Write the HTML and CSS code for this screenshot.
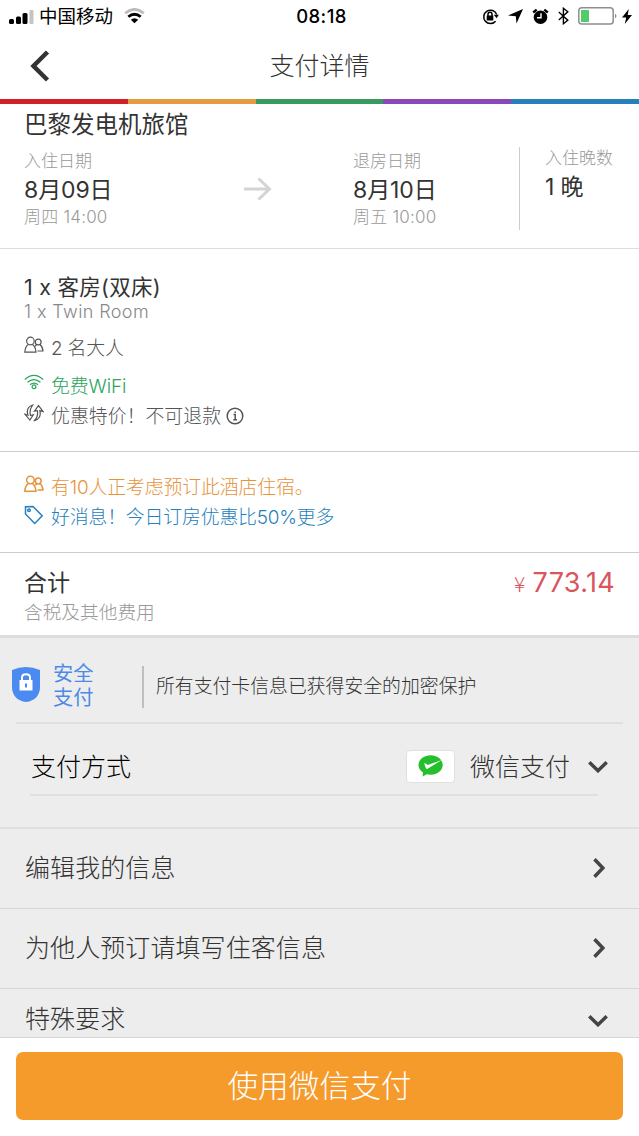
FILE: index.html
```html
<!DOCTYPE html>
<html lang="zh-CN">
<head>
<meta charset="utf-8">
<meta name="viewport" content="width=device-width, initial-scale=1">
<title>支付详情</title>
<link rel="stylesheet" href="styles.css">
</head>
<body>
<svg class="sprite" aria-hidden="true">
  <symbol id="people" viewBox="0 0 20 18">
    <path d="M4.500 8.300C2.200 10 1 12.500 .8 16.200H12C11.700 12.500 10.600 10 8.300 8.300"/>
    <circle cx="6.400" cy="5" r="3.800"/>
    <circle cx="14.200" cy="6" r="2.900"/>
    <path d="M11.300 10.300l1.200-1.700M15.900 8.500c1.900 1.400 2.900 3.700 3.100 6.500h-5.500"/>
  </symbol>
  <symbol id="chevron" viewBox="0 0 20 12"><path d="M1.300 1.300 10 9.700l8.700-8.400"/></symbol>
</svg>
<div class="phone">
  <header class="status">
    <div class="carrier">
      <svg width="26" height="17" viewBox="0 0 26 17"><rect x="0" y="11" width="5" height="5" rx="1.500"/><rect x="7" y="8.500" width="5" height="7.500" rx="1.500"/><rect x="13.500" y="5" width="5" height="11" rx="1.500"/><rect x="20.500" y="2" width="4" height="14" rx="1" fill="#c4c4c4"/></svg>
      <span>中国移动</span>
      <svg class="signal" width="21" height="16" viewBox="0 0 21 16" fill="none"><path d="M1.200 5.300Q10.500-2.500 19.800 5.300" stroke="#bbb" stroke-width="2.800"/><path d="M4.300 8.800q6.200-5.200 12.400 0" stroke="#000" stroke-width="2.800"/><path d="M6.800 11.700q3.700-3 7.400 0L10.500 15.300Z" fill="#000"/></svg>
    </div>
    <time class="clock">08:18</time>
    <div class="indicators">
      <svg width="17" height="17" viewBox="0 0 17 17" fill="none" stroke="#000" stroke-width="1.500"><path d="M13.600 13.200A6.700 6.700 0 1 1 14.700 6.500"/><path d="m11.800 6.800 5 0-2.200 3.500Z" fill="#000" stroke="none"/><rect x="4.700" y="7.500" width="6.600" height="5" fill="#000" stroke="none"/><path d="M6 8V6.200a2 2 0 0 1 4 0V8"/></svg>
      <svg width="15" height="15" viewBox="0 0 15 15"><path d="M15 0 8.500 14.500 7.800 7.300 0 6.500Z"/></svg>
      <svg width="17" height="17" viewBox="0 0 17 17"><circle cx="8.500" cy="9.200" r="6.800"/><path d="M1.200 4.500 4.700 1.600M12.300 1.600l3.500 2.900" stroke="#000" stroke-width="2.300"/><path d="M9 5.200v4.600H5" fill="none" stroke="#fff" stroke-width="1.400"/></svg>
      <svg width="11" height="18" viewBox="0 0 11 18" fill="none" stroke="#000" stroke-width="1.400"><path d="m.8 5 9 8.200L5.400 16.700V1.300L9.800 4.800.8 13"/></svg>
      <svg class="battery" width="40" height="18" viewBox="0 0 40 18"><rect x=".8" y=".8" width="34.400" height="16.200" rx="3" fill="#fff" stroke="#8e8e8e" stroke-width="1.500"/><rect x="3" y="3" width="8" height="12" fill="#53cb68"/><path d="M37 6.500q3 2.400 0 5Z" fill="#8e8e8e"/></svg>
      <svg width="10" height="15" viewBox="0 0 10 15"><path d="M6.800 0 0 8.500h4.200L2.800 15 10 6H5.700Z"/></svg>
    </div>
  </header>
  <nav class="nav">
    <svg class="back" width="20" height="32" viewBox="0 0 20 32"><path d="M17.500 2 3.500 16l14 14"/></svg>
    <h1>支付详情</h1>
  </nav>
  <div class="strip"><i class="red"></i><i class="amber"></i><i class="green"></i><i class="violet"></i><i class="blue"></i></div>

  <section class="stay">
    <h2>巴黎发电机旅馆</h2>
    <div class="dates">
      <div class="date"><p class="label">入住日期</p><p class="value">8月09日</p><p class="time">周四 14:00</p></div>
      <svg class="arrow" width="28" height="24" viewBox="0 0 28 24"><path d="M0 12h25M14.500 1.500 25.500 12l-11 10.500"/></svg>
      <div class="date checkout"><p class="label">退房日期</p><p class="value">8月10日</p><p class="time">周五 10:00</p></div>
      <div class="nights"><p class="label">入住晚数</p><p class="value">1 晚</p></div>
    </div>
  </section>

  <section class="room">
    <h2>1 x 客房(双床)</h2>
    <p class="subtitle">1 x Twin Room</p>
    <p class="item guests"><svg class="icon" width="20" height="18"><use href="#people"/></svg><span>2 名大人</span></p>
    <p class="item wifi"><svg class="icon" width="20" height="16" viewBox="0 0 20 16"><path d="M.8 5.500Q10-2.800 19.200 5.500M3.500 8.300q6.500-5.500 13 0M6 10.800q4-3.300 8 0"/><circle cx="10" cy="12.800" r="1.900"/></svg><span>免费WiFi</span></p>
    <p class="item deal"><svg class="icon" width="20" height="18" viewBox="0 0 20 18"><path d="M8.700 1C4 2.600 2.400 6.500 4 11.200L1 10.300l4.900 5.800 3.400-5.400-2.800.8C5.500 7.800 6.300 4.300 8.700 1Z"/><path d="M9.800 16.900c4.800-.7 7.500-4.800 6-10.300l3.200.9L14.500 1.600l-4 5.500 2.900-.5c.7 4.400-.3 7.800-3.600 10.300Z"/></svg><span>优惠特价！不可退款</span><svg class="info" width="18" height="18" viewBox="0 0 18 18"><circle cx="9" cy="9" r="7.800"/><path d="M7.500 7.500h1.700v5.300M7.300 12.800h3.700M9.200 4.400v1.500"/></svg></p>
  </section>

  <section class="promo">
    <p class="item interest"><svg class="icon" width="20" height="18"><use href="#people"/></svg><span>有10人正考虑预订此酒店住宿。</span></p>
    <p class="item news"><svg class="icon" width="20" height="20" viewBox="0 0 20 20"><path d="M1.500 1.800 9 1.500l9.200 9.300-7.500 7.700L1.500 9Z"/><circle cx="5" cy="5.300" r="1.300"/></svg><span>好消息！今日订房优惠比50%更多</span></p>
  </section>

  <section class="total">
    <div><h2>合计</h2><p>含税及其他费用</p></div>
    <p class="price"><span class="currency">¥</span>773.14</p>
  </section>

  <main class="payment">
    <section class="secure">
      <svg class="shield" width="28" height="35" viewBox="0 0 28 35"><path d="M14 0q7 0 14 3v17c0 8-5 14-14 15C5 34 0 28 0 20V3Q7 0 14 0Z" fill="#4b8af0"/><rect x="7.500" y="13" width="13" height="10.500" fill="#fff"/><path d="M10 14v-3.500q0-3.300 4-3.300t4 3.300V14" fill="none" stroke="#fff" stroke-width="2"/><path d="M14 16.500v4" stroke="#4b8af0" stroke-width="2"/></svg>
      <strong>安全<br>支付</strong>
      <p>所有支付卡信息已获得安全的加密保护</p>
    </section>
    <section class="method">
      <div class="method-row">
        <span class="method-label">支付方式</span>
        <span class="wechat"><svg width="25" height="22" viewBox="0 0 25 22"><path d="M12.700.3C5.900.3.500 4.600.500 10c0 3.100 1.700 5.800 4.500 7.600L4.600 21.500 8.800 19.200c1.200.3 2.500.5 3.900.5 6.700 0 12-4.300 12-9.700S19.400.3 12.700.3Z" fill="#25bf2d"/><path d="M6.200 8.500q1-.8 3.500 1.500L23.800 5 9.600 13.700q-1.300.8-1.800-.8Z" fill="#fff"/></svg></span>
        <span>微信支付</span>
        <svg class="chevron" width="20" height="12"><use href="#chevron"/></svg>
      </div>
    </section>
    <div class="row"><span>编辑我的信息</span><svg class="chevron" width="12" height="20" viewBox="0 0 12 20"><path d="m1.500 1.300 8.400 8.700-8.400 8.700"/></svg></div>
    <div class="row"><span>为他人预订请填写住客信息</span><svg class="chevron" width="12" height="20" viewBox="0 0 12 20"><path d="m1.500 1.300 8.400 8.700-8.400 8.700"/></svg></div>
    <div class="row requests"><span>特殊要求</span><svg class="chevron" width="20" height="12"><use href="#chevron"/></svg></div>
  </main>
  <footer class="footer"><button class="pay" type="button">使用微信支付</button></footer>
</div>
</body>
</html>
```

FILE: styles.css
```css
* { box-sizing: border-box; }
body, h1, h2, p { margin: 0; }
body {
  background: #fff;
  color: #333;
  font-family: Inter, "Noto Sans CJK SC", sans-serif;
  font-weight: 300;
}
h1, h2 { font-weight: 400; }
svg { display: block; flex: none; }
.sprite { position: absolute; width: 0; height: 0; }
.phone {
  display: flex;
  flex-direction: column;
  width: 639px;
  height: 1136px;
  overflow: hidden;
}

/* Status bar */
.status {
  display: grid;
  grid-template-columns: 1fr auto 1fr;
  align-items: center;
  height: 32px;
  padding: 0 7px 0 9px;
  color: #000;
}
.carrier { display: flex; align-items: center; font-size: 18.500px; font-weight: 400; line-height: 32px; }
.carrier span { margin-left: 4px; }
.signal { margin-left: 11px; }
.clock { padding-left: 2px; font-size: 18.500px; font-weight: 500; line-height: 32px; letter-spacing: .4px; }
.indicators { display: flex; align-items: center; justify-content: flex-end; gap: 9px; }
.indicators .battery { margin-right: -5px; }

/* Navigation */
.nav {
  display: grid;
  grid-template-columns: 100px 1fr 100px;
  align-items: center;
  height: 67px;
}
.nav h1 { padding-top: 2px; font-size: 25px; font-weight: 300; line-height: 65px; text-align: center; }
.back { margin-left: 30px; fill: none; stroke: #333; stroke-width: 4.500; }
.strip { display: flex; height: 5px; }
.strip i { flex: 1; }
.red { background: #d32027; }
.amber { background: #e49b43; }
.green { background: #389b5d; }
.violet { background: #8b48b8; }
.blue { background: #2880ba; }

/* Stay */
.stay { height: 145px; padding: 3px 0 0 24px; border-bottom: 1px solid #ddd; }
.stay h2 { font-size: 23.500px; line-height: 36px; }
.dates { display: flex; align-items: flex-start; }
.date { width: 220px; padding-top: 3px; }
.label { color: #999; font-size: 17px; line-height: 30px; }
.value { margin-top: -1px; font-size: 23px; font-weight: 400; line-height: 30px; letter-spacing: -.1px; }
.time { color: #999; font-size: 17px; line-height: 24px; letter-spacing: .2px; }
.arrow { margin: 34px 81px 0 0; fill: none; stroke: #d4d4d4; stroke-width: 3; }
.checkout { width: 166px; }
.nights { height: 83px; margin-top: 4px; padding-left: 25px; border-left: 1px solid #ccc; }
.nights .label { margin-top: -4px; }

/* Room */
.room { height: 203px; padding: 24px 24px 0; border-bottom: 1px solid #ccc; }
.room h2 { font-size: 21.500px; line-height: 28px; letter-spacing: .25px; }
.subtitle { color: #888; font-size: 18px; line-height: 21px; letter-spacing: .4px; }
.item { display: flex; font-size: 18.900px; line-height: 30px; }
.icon { margin: 2px 7px 0 0; fill: none; stroke: currentColor; stroke-width: 1.200; }
.guests { margin: 12px 0 8px; color: #555; letter-spacing: -.2px; }
.wifi { color: #2ca45a; letter-spacing: -.1px; }
.deal { color: #555; }
.info { margin: 5px 0 0 5px; fill: none; stroke: #555; stroke-width: 1.500; }

/* Promotion */
.promo { height: 101px; padding: 21px 24px 0; border-bottom: 1px solid #ccc; }
.room { height: 204px; }
.interest { color: #e6943c; letter-spacing: -.15px; }
.interest .icon { stroke-width: 1.500; }
.news { color: #2580bb; letter-spacing: -.18px; }
.news .icon { stroke-width: 1.500; }

/* Total */
.total {
  display: flex;
  justify-content: space-between;
  height: 85px;
  padding: 15px 24px 0;
  border-bottom: 3px solid #ddd;
}
.total h2 { font-size: 23px; line-height: 30px; }
.total p { color: #999; font-size: 18.700px; line-height: 30px; }
.total .price { color: #d9565e; font-size: 27px; font-weight: 400; letter-spacing: .3px; }
.currency { margin-right: 7px; font-family: "Noto Sans CJK SC", sans-serif; font-size: 21px; font-weight: 300; }

/* Payment */
.payment { flex: 1; background: #ededed; }
.secure {
  display: flex;
  align-items: center;
  height: 86px;
  margin: 0 16px;
  border-bottom: 2px solid #e0e0e0;
}
.shield { margin: 8px 0 0 -4px; }
.secure strong { width: 89px; margin: 12px 0 0 13px; color: #4d8ae7; font-size: 20.300px; font-weight: 400; line-height: 24px; }
.secure p { margin-top: 13px; padding-left: 12px; border-left: 2px solid #bfbfbf; font-size: 18.850px; line-height: 42px; }
.method { height: 105px; padding: 0 41px 0 30px; border-bottom: 2px solid #e0e0e0; }
.method-row { display: flex; align-items: center; height: 72px; border-bottom: 2px solid #e0e0e0; font-size: 25px; line-height: 54px; padding-top: 14px; }
.method-row span:not(.wechat) { padding-top: 2px; }
.method-label { flex: 1; padding-left: 1px; color: #000; }
.wechat {
  display: grid;
  place-items: center;
  width: 49px;
  height: 33px;
  margin-right: 15px;
  border: 1px solid #e0e0e0;
  border-radius: 4px;
  background: #fff;
}
.chevron { fill: none; stroke: #444; stroke-width: 3.500; }
.method .chevron { margin: 1px -10px 0 18px; }
.row {
  display: flex;
  align-items: center;
  justify-content: space-between;
  height: 80px;
  padding: 0 34px 1px 25px;
  border-bottom: 1px solid #d6d6d6;
  font-size: 25px;
  line-height: 40px;
}
.row span { letter-spacing: .08px; }
.requests { height: 49px; padding: 12px 31px 0 25px; }
.requests .chevron { margin-top: 4px; }
.footer { height: 98px; padding: 14px 16px 16px; }
.pay {
  display: block;
  width: 100%;
  height: 68px;
  padding: 0;
  border: 0;
  border-radius: 7px;
  background: #f59b2c;
  color: #fff;
  font: 300 30.700px/68px Inter, "Noto Sans CJK SC", sans-serif;
}
```
